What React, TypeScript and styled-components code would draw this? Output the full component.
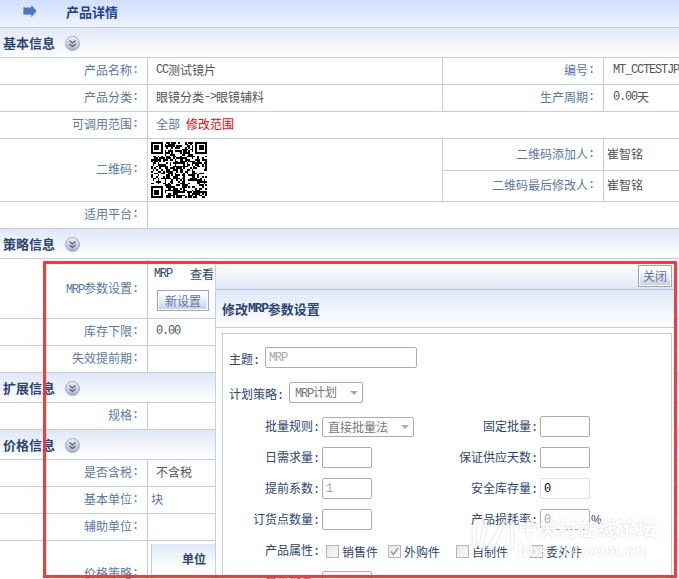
import React from "react";
import styled, { createGlobalStyle } from "styled-components";

const Global = createGlobalStyle`
  html, body { margin: 0; padding: 0; background: #fff; overflow: hidden; }
  body { font-family: "Noto Sans CJK SC", "Liberation Sans", sans-serif; font-size: 12px; line-height: 1; }
  * { box-sizing: border-box; }
`;

const LINE = "#c3cddd";
const LABEL = "#5878a8";
const VALUE = "#555";
const NAVY = "#2c4672";

const Page = styled.div`
  position: relative;
  width: 679px;
  height: 579px;
  overflow: hidden;
`;
const TitleBar = styled.div`
  height: 28px;
  display: flex;
  align-items: center;
  padding: 0 0 5px 22px;
  gap: 28px;
  background: linear-gradient(#d0e0ff, #eef3ff);
  border-bottom: 1px solid #bfc9d8;
`;
const Title = styled.span`
  font-size: 13px;
  font-weight: 700;
  color: #1c3f9c;
`;
const Section = styled.div`
  height: 30px;
  display: flex;
  align-items: center;
  gap: 10px;
  padding-left: 3px;
  background: linear-gradient(#dfe8f8, #fff);
  border-bottom: 1px solid ${LINE};
`;
const SectionTitle = styled.span`
  font-size: 13px;
  font-weight: 700;
  color: ${NAVY};
`;
const ToggleWrap = styled.span`
  display: flex;
  padding-top: 1px;
`;
const Row = styled.div<{ $h?: number; $cols?: string }>`
  display: grid;
  grid-template-columns: ${(p) => p.$cols || "148px 1fr"};
  height: ${(p) => p.$h || 27}px;
  border-bottom: 1px solid ${LINE};
`;
const LabelCell = styled.div<{ $flat?: boolean }>`
  display: flex;
  align-items: center;
  justify-content: flex-end;
  padding: 0 9px ${(p) => (p.$flat ? 0 : 2)}px 0;
  color: ${LABEL};
  border-right: 1px solid ${LINE};
`;
const ValueCell = styled.div<{ $pad?: number; $line?: boolean }>`
  display: flex;
  align-items: center;
  padding: 0 0 2px ${(p) => (p.$pad === undefined ? 8 : p.$pad)}px;
  color: ${VALUE};
  min-width: 0;
  white-space: nowrap;
  overflow: hidden;
  border-right: ${(p) => (p.$line ? `1px solid ${LINE}` : "none")};
`;
const Mono = styled.span`
  font-family: "Liberation Mono", monospace;
  letter-spacing: -1.2px;
`;
const Red = styled.span`
  color: #f00;
  margin-left: 6px;
`;
const Blue = styled.span`
  color: ${LABEL};
`;
const QrCell = styled.div`
  padding: 3px 0 0 3px;
  border-right: 1px solid ${LINE};
`;
const SubStack = styled.div`
  display: grid;
  grid-template-rows: 1fr 1fr;
`;
const SubRow = styled.div`
  display: grid;
  grid-template-columns: 161px 1fr;
  & + & { border-top: 1px solid ${LINE}; }
`;
const MrpCell = styled.div`
  padding: 9px 0 0 6px;
  color: ${NAVY};
  white-space: nowrap;
  overflow: hidden;
`;
const MrpLine = styled.div`
  display: flex;
  gap: 18px;
  height: 12px;
  align-items: center;
`;
const GreyButton = styled.button`
  appearance: none;
  padding: 0;
  font: inherit;
  color: ${LABEL};
  border: 1px solid #9ca6c6;
  outline: 1px solid #fff;
  outline-offset: -2px;
  background: linear-gradient(#fff 20%, #c8cce0);
`;
const NewButton = styled(GreyButton)`
  display: block;
  width: 52px;
  height: 21px;
  margin: 10px 0 0 3px;
`;
const CloseButton = styled(GreyButton)`
  width: 34px;
  height: 22px;
`;
const NestedHead = styled.div`
  margin: 3px 0 0 3px;
  height: 60px;
  padding: 9px 10px 0 30px;
  font-weight: 700;
  color: ${NAVY};
  border-left: 1px solid ${LINE};
  background: linear-gradient(#dfe8f8, #fff 40%);
`;
const Dialog = styled.div`
  position: absolute;
  left: 215px;
  top: 262px;
  width: 462px;
  height: 317px;
  background: #fff;
  border-left: 1px solid #c5d0e0;
`;
const DialogTop = styled.div`
  height: 28px;
  display: flex;
  justify-content: flex-end;
  padding: 3px 5px 0 0;
  background: linear-gradient(#fff, #dfe7f7);
  border-bottom: 1px solid #b9c3d6;
`;
const DialogHead = styled.div`
  height: 38px;
  display: flex;
  align-items: center;
  padding: 0 0 1px 6px;
  font-size: 13px;
  font-weight: 700;
  color: ${NAVY};
  background: linear-gradient(#dfe8f8, #fff);
  border-bottom: 1px solid ${LINE};
`;
const HeadMono = styled.span`
  font-family: "Liberation Mono", monospace;
  letter-spacing: -1.2px;
`;
const FormBox = styled.div`
  margin: 5px 5px 0 6px;
  height: 260px;
  border: 1px solid ${LINE};
  padding-top: 13px;
  color: ${NAVY};
  white-space: nowrap;
`;
const TopRow = styled.div<{ $mt?: number }>`
  display: flex;
  align-items: center;
  gap: 6px;
  padding-left: 6px;
  margin-top: ${(p) => p.$mt || 0}px;
`;
const TopLabel = styled.span`
  padding-top: 5px;
`;
const PairRow = styled.div<{ $mt?: number }>`
  display: grid;
  grid-template-columns: 96px 50px 162px 50px;
  column-gap: 3px;
  align-items: center;
  margin-top: ${(p) => p.$mt ?? 10}px;
`;
const FormLabel = styled.span`
  text-align: right;
`;
const Field = styled.input<{ $w?: number; $soft?: boolean; $muted?: boolean }>`
  display: block;
  width: ${(p) => p.$w || 50}px;
  height: 21px;
  padding: 0 3px;
  border: 1px solid ${(p) => (p.$soft ? "#dcdff0" : "#adadad")};
  border-radius: 2px;
  outline: none;
  background: #fff;
  font-family: "Liberation Mono", monospace;
  font-size: 12px;
  letter-spacing: -1.2px;
  color: ${(p) => (p.$muted ? "#aaa" : "#000")};
`;
const Select = styled.div<{ $w: number; $h?: number }>`
  position: relative;
  display: flex;
  align-items: center;
  width: ${(p) => p.$w}px;
  height: ${(p) => p.$h || 21}px;
  padding-left: 5px;
  color: #777;
  border: 1px solid #adadad;
  border-radius: 2px;
  background: #fff;
  &::after {
    content: "";
    position: absolute;
    right: 4px;
    top: 50%;
    margin-top: -2px;
    border: 4px solid transparent;
    border-bottom-width: 0;
    border-top: 4px solid #aaa;
  }
`;
const PercentWrap = styled.div`
  position: relative;
`;
const Percent = styled.span`
  position: absolute;
  left: 51px;
  top: 5px;
  font-family: "Liberation Sans", sans-serif;
`;
const AttrRow = styled.div`
  display: flex;
  align-items: center;
  height: 21px;
  margin-top: 10px;
`;
const AttrLabel = styled(FormLabel)`
  width: 96px;
  margin-right: 7px;
`;
const Check = styled.label<{ $w: number }>`
  display: flex;
  align-items: center;
  gap: 3px;
  width: ${(p) => p.$w}px;
  padding-top: 2px;
`;
const Box = styled.span`
  width: 13px;
  height: 13px;
  display: flex;
  align-items: center;
  justify-content: center;
  border: 1px solid #b5b5b5;
  background: linear-gradient(135deg, #e8e8e8, #fafafa);
`;
const Watermark = styled.div`
  position: absolute;
  left: 472px;
  top: 516px;
  display: flex;
  gap: 4px;
  pointer-events: none;
  opacity: 0.8;
`;
const MarkText = styled.div`
  color: #fff;
  font-weight: 700;
  text-shadow: 0 0 2px rgba(130, 130, 130, 0.5);
`;
const MarkCn = styled(MarkText)`
  font-size: 19.8px;
  line-height: 24px;
  margin-bottom: 2px;
`;
const MarkEn = styled(MarkText)`
  font-family: "Liberation Sans", sans-serif;
  font-size: 16px;
  letter-spacing: 0.9px;
  line-height: 18px;
`;
const RedFrame = styled.div`
  position: absolute;
  left: 43px;
  top: 261px;
  width: 634px;
  height: 317px;
  border: 3px solid #ff3636;
  pointer-events: none;
`;

const Label = ({ children, flat }: { children: React.ReactNode; flat?: boolean }) => (
  <LabelCell $flat={flat}>
    <span>{children}</span>
    <Mono>:</Mono>
  </LabelCell>
);

const Toggle = () => (
  <ToggleWrap>
    <svg width="15" height="15" viewBox="0 0 15 15">
      <defs>
        <linearGradient id="tg" x1="0" y1="0" x2="0" y2="1">
          <stop offset="0" stopColor="#eef0f6" />
          <stop offset="1" stopColor="#a8b1cb" />
        </linearGradient>
      </defs>
      <circle cx="7.5" cy="7.5" r="7" fill="url(#tg)" stroke="#a4adc2" />
      <path d="M4.5 4.500l3 2.500 3-2.500M4.500 8l3 2.500 3-2.500" fill="none" stroke="#56627a" strokeWidth="1.2" />
    </svg>
  </ToggleWrap>
);

const Arrow = () => (
  <svg width="16" height="16" viewBox="0 0 16 16">
    <path d="M1 4h8V1l6 7-6 7v-3H1z" fill="#4a78c9" stroke="#e4edff" strokeWidth="0.8" />
  </svg>
);

const QR_N = 33;
const qrCells = (): [number, number][] => {
  const out: [number, number][] = [];
  let s = 0x2f6e2b1;
  const inFinder = (x: number, y: number, fx: number, fy: number) =>
    x >= fx - 1 && x <= fx + 7 && y >= fy - 1 && y <= fy + 7;
  const finder = (x: number, y: number, fx: number, fy: number) => {
    const a = x - fx;
    const b = y - fy;
    if (a < 0 || b < 0 || a > 6 || b > 6) return false;
    if (a === 0 || a === 6 || b === 0 || b === 6) return true;
    return a >= 2 && a <= 4 && b >= 2 && b <= 4;
  };
  const fs = [[0, 0], [QR_N - 7, 0], [0, QR_N - 7]];
  for (let y = 0; y < QR_N; y++) {
    for (let x = 0; x < QR_N; x++) {
      s ^= s << 13;
      s ^= s >>> 17;
      s ^= s << 5;
      const f = fs.find(([fx, fy]) => inFinder(x, y, fx, fy));
      const on = f ? finder(x, y, f[0], f[1]) : (s >>> 3) % 100 < 52;
      if (on) out.push([x, y]);
    }
  }
  return out;
};
const Qr = () => (
  <svg width="56" height="56" viewBox={`0 0 ${QR_N} ${QR_N}`} shapeRendering="crispEdges">
    {qrCells().map(([x, y]) => (
      <rect key={`${x}-${y}`} x={x} y={y} width="1" height="1" fill="#000" />
    ))}
  </svg>
);

const Logo = () => (
  <svg width="42" height="38" viewBox="0 0 42 38" style={{ filter: "drop-shadow(0 0 1px rgba(130,130,130,.5))" }}>
    <path d="M4 4C1 14 1 24 4 34M39 4c2 10 2 20 0 30" fill="none" stroke="#fff" strokeWidth="2.5" />
    <path d="M12 4l4 0-6 30-3 0zM32 4l2 0-13 30-7 0z" fill="#fff" />
  </svg>
);

const Colon = () => <Mono>:</Mono>;

const Pair = ({ l, r, rv, soft, lv, lm }: { l: string; r: string; rv?: string; soft?: boolean; lv?: string; lm?: boolean }) => (
  <PairRow>
    <FormLabel>{l}<Colon /></FormLabel>
    <Field readOnly value={lv || ""} $muted={lm} />
    <FormLabel>{r}<Colon /></FormLabel>
    <Field readOnly value={rv || ""} $soft={soft} />
  </PairRow>
);

const COLS4 = "148px 295px 161px 1fr";

export default function App() {
  return (
    <Page>
      <Global />
      <TitleBar>
        <Arrow />
        <Title>产品详情</Title>
      </TitleBar>

      <Section><SectionTitle>基本信息</SectionTitle><Toggle /></Section>
      <Row $cols={COLS4}>
        <Label>产品名称</Label>
        <ValueCell $line><Mono>CC</Mono>测试镜片</ValueCell>
        <Label>编号</Label>
        <ValueCell $pad={9}><Mono>MT_CCTESTJP</Mono></ValueCell>
      </Row>
      <Row $cols={COLS4}>
        <Label>产品分类</Label>
        <ValueCell $line>眼镜分类<Mono>-&gt;</Mono>眼镜辅料</ValueCell>
        <Label>生产周期</Label>
        <ValueCell $pad={9}><Mono>0.00</Mono>天</ValueCell>
      </Row>
      <Row>
        <Label>可调用范围</Label>
        <ValueCell><Blue>全部</Blue><Red>修改范围</Red></ValueCell>
      </Row>
      <Row $h={63} $cols="148px 295px 1fr">
        <Label>二维码</Label>
        <QrCell><Qr /></QrCell>
        <SubStack>
          <SubRow>
            <Label>二维码添加人</Label>
            <ValueCell $pad={3}>崔智铭</ValueCell>
          </SubRow>
          <SubRow>
            <Label>二维码最后修改人</Label>
            <ValueCell $pad={3}>崔智铭</ValueCell>
          </SubRow>
        </SubStack>
      </Row>
      <Row>
        <Label>适用平台</Label>
        <ValueCell />
      </Row>

      <Section><SectionTitle>策略信息</SectionTitle><Toggle /></Section>
      <Row $h={60}>
        <Label flat><Mono>MRP</Mono>参数设置</Label>
        <MrpCell>
          <MrpLine><Mono>MRP</Mono><span>查看</span></MrpLine>
          <NewButton>新设置</NewButton>
        </MrpCell>
      </Row>
      <Row>
        <Label>库存下限</Label>
        <ValueCell><Mono>0.00</Mono></ValueCell>
      </Row>
      <Row>
        <Label>失效提前期</Label>
        <ValueCell />
      </Row>

      <Section><SectionTitle>扩展信息</SectionTitle><Toggle /></Section>
      <Row>
        <Label>规格</Label>
        <ValueCell />
      </Row>

      <Section><SectionTitle>价格信息</SectionTitle><Toggle /></Section>
      <Row>
        <Label>是否含税</Label>
        <ValueCell>不含税</ValueCell>
      </Row>
      <Row>
        <Label>基本单位</Label>
        <ValueCell $pad={3}><Blue>块</Blue></ValueCell>
      </Row>
      <Row>
        <Label>辅助单位</Label>
        <ValueCell />
      </Row>
      <Row $h={63}>
        <Label flat>价格策略</Label>
        <NestedHead>单位</NestedHead>
      </Row>

      <Dialog>
        <DialogTop><CloseButton>关闭</CloseButton></DialogTop>
        <DialogHead>修改<HeadMono>MRP</HeadMono>参数设置</DialogHead>
        <FormBox>
          <TopRow>
            <TopLabel>主题<Colon /></TopLabel>
            <Field readOnly value="MRP" $w={152} $muted />
          </TopRow>
          <TopRow $mt={14}>
            <TopLabel>计划策略<Colon /></TopLabel>
            <Select $w={74}><span><Mono>MRP</Mono>计划</span></Select>
          </TopRow>
          <PairRow $mt={13}>
            <FormLabel>批量规则<Colon /></FormLabel>
            <Select $w={92} $h={20}><span>直接批量法</span></Select>
            <FormLabel>固定批量<Colon /></FormLabel>
            <Field readOnly value="" />
          </PairRow>
          <Pair l="日需求量" r="保证供应天数" />
          <Pair l="提前系数" lv="1" lm r="安全库存量" rv="0" soft />
          <PairRow>
            <FormLabel>订货点数量<Colon /></FormLabel>
            <Field readOnly value="" />
            <FormLabel>产品损耗率<Colon /></FormLabel>
            <PercentWrap>
              <Field readOnly value="0" $muted />
              <Percent>%</Percent>
            </PercentWrap>
          </PairRow>
          <AttrRow>
            <AttrLabel>产品属性<Colon /></AttrLabel>
            <Check $w={62}><Box />销售件</Check>
            <Check $w={68}>
              <Box>
                <svg width="9" height="9" viewBox="0 0 9 9">
                  <path d="M1 4.500l2.500 3L8 1" fill="none" stroke="#9a9a9a" strokeWidth="1.500" />
                </svg>
              </Box>
              外购件
            </Check>
            <Check $w={74}><Box />自制件</Check>
            <Check $w={60}><Box />委外件</Check>
          </AttrRow>
          <PairRow>
            <FormLabel>最小批量<Colon /></FormLabel>
            <Field readOnly value="" />
          </PairRow>
        </FormBox>
      </Dialog>

      <Watermark>
        <Logo />
        <div>
          <MarkCn>中关村在线论坛</MarkCn>
          <MarkEn>bbs.zol.com.cn</MarkEn>
        </div>
      </Watermark>
      <RedFrame />
    </Page>
  );
}
